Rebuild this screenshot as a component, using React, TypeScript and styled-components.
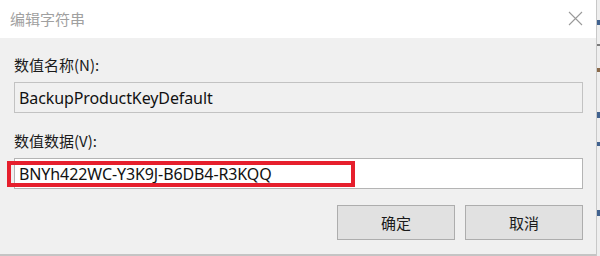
import styled, { createGlobalStyle } from "styled-components";

const GlobalStyle = createGlobalStyle`
  html, body {
    margin: 0;
    padding: 0;
    background: #ffffff;
  }
`;

const Screen = styled.div`
  display: flex;
  width: 600px;
  height: 256px;
  overflow: hidden;
  font-family: "Noto Sans", "Noto Sans CJK SC", sans-serif;
`;

const Dialog = styled.div`
  display: flex;
  flex-direction: column;
  width: 597px;
  height: 254px;
  background: #f0f0f0;
  border-bottom: 2px solid #c4c4c4;
`;

const TitleBar = styled.div`
  display: flex;
  justify-content: space-between;
  align-items: center;
  height: 38px;
  padding: 0 13px 0 10px;
  background: #ffffff;
`;

const Title = styled.span`
  font-family: "Noto Sans CJK SC", sans-serif;
  font-size: 15px;
  color: #a0a0a0;
  line-height: 20px;
  margin-top: -1px;
`;

const Close = styled.button`
  display: flex;
  width: 15px;
  height: 15px;
  padding: 0;
  border: 0;
  background: none;
  margin-top: -1px;
`;

const Body = styled.div`
  display: flex;
  flex-direction: column;
  padding: 17px 13px 0 14px;
`;

const Label = styled.div<{ $gap: number }>`
  margin-top: ${(p) => p.$gap}px;
  font-family: "Noto Sans CJK SC", sans-serif;
  font-size: 15px;
  line-height: 20px;
  color: #1a1a1a;
`;

const FieldWrap = styled.div`
  position: relative;
  margin-top: 7px;
`;

const Field = styled.div<{ $readOnly?: boolean }>`
  display: flex;
  align-items: center;
  height: 31px;
  box-sizing: border-box;
  padding: 0 4px;
  border: 1px solid ${(p) => (p.$readOnly ? "#c2c2c2" : "#b4b4b4")};
  background: ${(p) => (p.$readOnly ? "#f0f0f0" : "#ffffff")};
  font-size: 16px;
  letter-spacing: -0.1px;
  color: #111111;
  white-space: nowrap;
`;

const Highlight = styled.div`
  position: absolute;
  left: -7px;
  top: 3px;
  width: 348px;
  height: 26px;
  box-sizing: border-box;
  border: 4px solid #e61f2d;
  pointer-events: none;
`;

const Actions = styled.div`
  display: flex;
  justify-content: flex-end;
  gap: 10px;
  margin-top: 16px;
`;

const Button = styled.button`
  width: 118px;
  height: 35px;
  border: 1px solid #adadad;
  background: #e1e1e1;
  font-family: "Noto Sans CJK SC", sans-serif;
  font-size: 15px;
  color: #1a1a1a;
  padding: 0;
`;

const Edge = styled.div`
  width: 3px;
  height: 256px;
  border-left: 1px solid #c8c8c8;
  background: linear-gradient(
    180deg,
    #eeeeee 0px, #eeeeee 20px,
    #41628f 20px, #41628f 25px,
    #eeeeee 25px, #eeeeee 44px,
    #7a7a7a 44px, #7a7a7a 46px,
    #eeeeee 46px, #eeeeee 68px,
    #8a6a4a 68px, #8a6a4a 72px,
    #eeeeee 72px, #eeeeee 112px,
    #41628f 112px, #41628f 118px,
    #eeeeee 118px, #eeeeee 142px,
    #41628f 142px, #41628f 146px,
    #eeeeee 146px, #eeeeee 210px,
    #41628f 210px, #41628f 216px,
    #eeeeee 216px, #eeeeee 256px
  );
`;

function App() {
  return (
    <>
      <GlobalStyle />
      <Screen>
        <Dialog>
          <TitleBar>
            <Title>编辑字符串</Title>
            <Close aria-label="关闭">
              <svg width="15" height="15" viewBox="0 0 15 15">
                <path d="M1 1L14 14M14 1L1 14" stroke="#9a9a9a" strokeWidth="1.1" fill="none" />
              </svg>
            </Close>
          </TitleBar>
          <Body>
            <Label $gap={0}>数值名称(N):</Label>
            <FieldWrap>
              <Field $readOnly>BackupProductKeyDefault</Field>
            </FieldWrap>
            <Label $gap={18}>数值数据(V):</Label>
            <FieldWrap>
              <Field>BNYh422WC-Y3K9J-B6DB4-R3KQQ</Field>
              <Highlight />
            </FieldWrap>
            <Actions>
              <Button>确定</Button>
              <Button>取消</Button>
            </Actions>
          </Body>
        </Dialog>
        <Edge />
      </Screen>
    </>
  );
}

export default App;
